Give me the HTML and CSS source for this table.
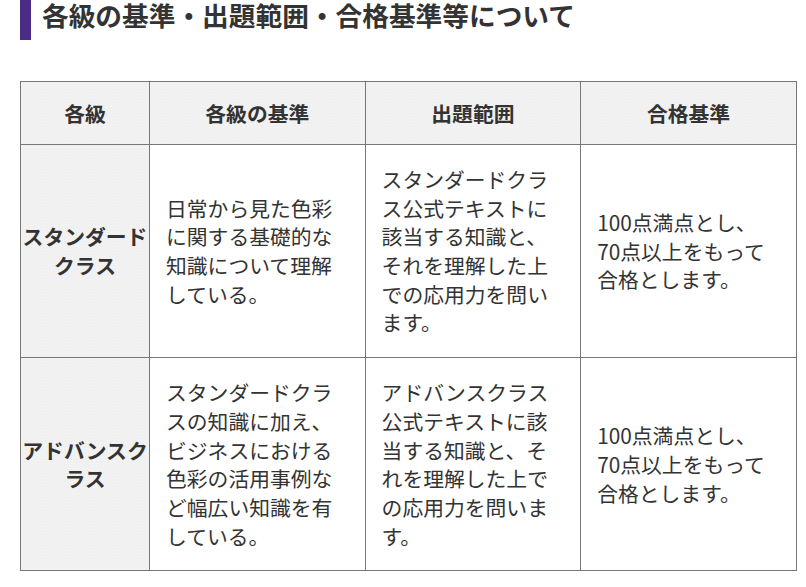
FILE: index.html
```html
<!DOCTYPE html>
<html lang="ja">
<head>
<meta charset="utf-8">
<title>各級の基準・出題範囲・合格基準等について</title>
<link rel="stylesheet" href="styles.css">
</head>
<body>
<h2 class="section-title">各級の基準・出題範囲・合格基準等について</h2>
<table class="grade-table">
  <colgroup>
    <col class="col-grade">
    <col class="col-wide">
    <col class="col-wide">
    <col class="col-wide">
  </colgroup>
  <thead>
    <tr>
      <th>各級</th>
      <th>各級の基準</th>
      <th>出題範囲</th>
      <th>合格基準</th>
    </tr>
  </thead>
  <tbody>
    <tr>
      <th class="row-head">スタンダードクラス</th>
      <td>日常から見た色彩に関する基礎的な知識について理解している。</td>
      <td>スタンダードクラス公式テキストに該当する知識と、それを理解した上での応用力を問います。</td>
      <td>100点満点とし、<br>70点以上をもって合格とします。</td>
    </tr>
    <tr>
      <th class="row-head">アドバンスクラス</th>
      <td>スタンダードクラスの知識に加え、ビジネスにおける色彩の活用事例など幅広い知識を有している。</td>
      <td>アドバンスクラス公式テキストに該当する知識と、それを理解した上での応用力を問います。</td>
      <td>100点満点とし、<br>70点以上をもって合格とします。</td>
    </tr>
  </tbody>
</table>
</body>
</html>
```
FILE: styles.css
```css
html, body {
  margin: 0;
  padding: 0;
  background: #ffffff;
}

body {
  padding: 0 20px;
  font-family: "Noto Sans CJK JP", "Noto Sans", sans-serif;
  color: #333333;
}

.section-title {
  margin: 0 0 41px 0;
  padding: 0 0 10px 11px;
  border-left: 11px solid #4a2b86;
  font-size: 26.7px;
  line-height: 30px;
  font-weight: 700;
  color: #333333;
}

.grade-table {
  width: 776px;
  table-layout: fixed;
  border-collapse: collapse;
  font-size: 20.8px;
  line-height: 28.7px;
}

.col-grade {
  width: 129px;
}

.col-wide {
  width: 215.6px;
}

.grade-table th,
.grade-table td {
  border: 1px solid #777777;
  vertical-align: middle;
}

.grade-table th {
  background-color: #f2f2f2;
  background-image: radial-gradient(rgba(0, 0, 0, 0.035) 0.6px, transparent 0.8px);
  background-size: 3px 3px;
  font-weight: 700;
  text-align: center;
  padding: 16.6px 0;
}

.grade-table .row-head {
  padding: 20px 0;
}

.grade-table td {
  padding: 20px 16px;
  text-align: left;
  font-weight: 400;
}
```
